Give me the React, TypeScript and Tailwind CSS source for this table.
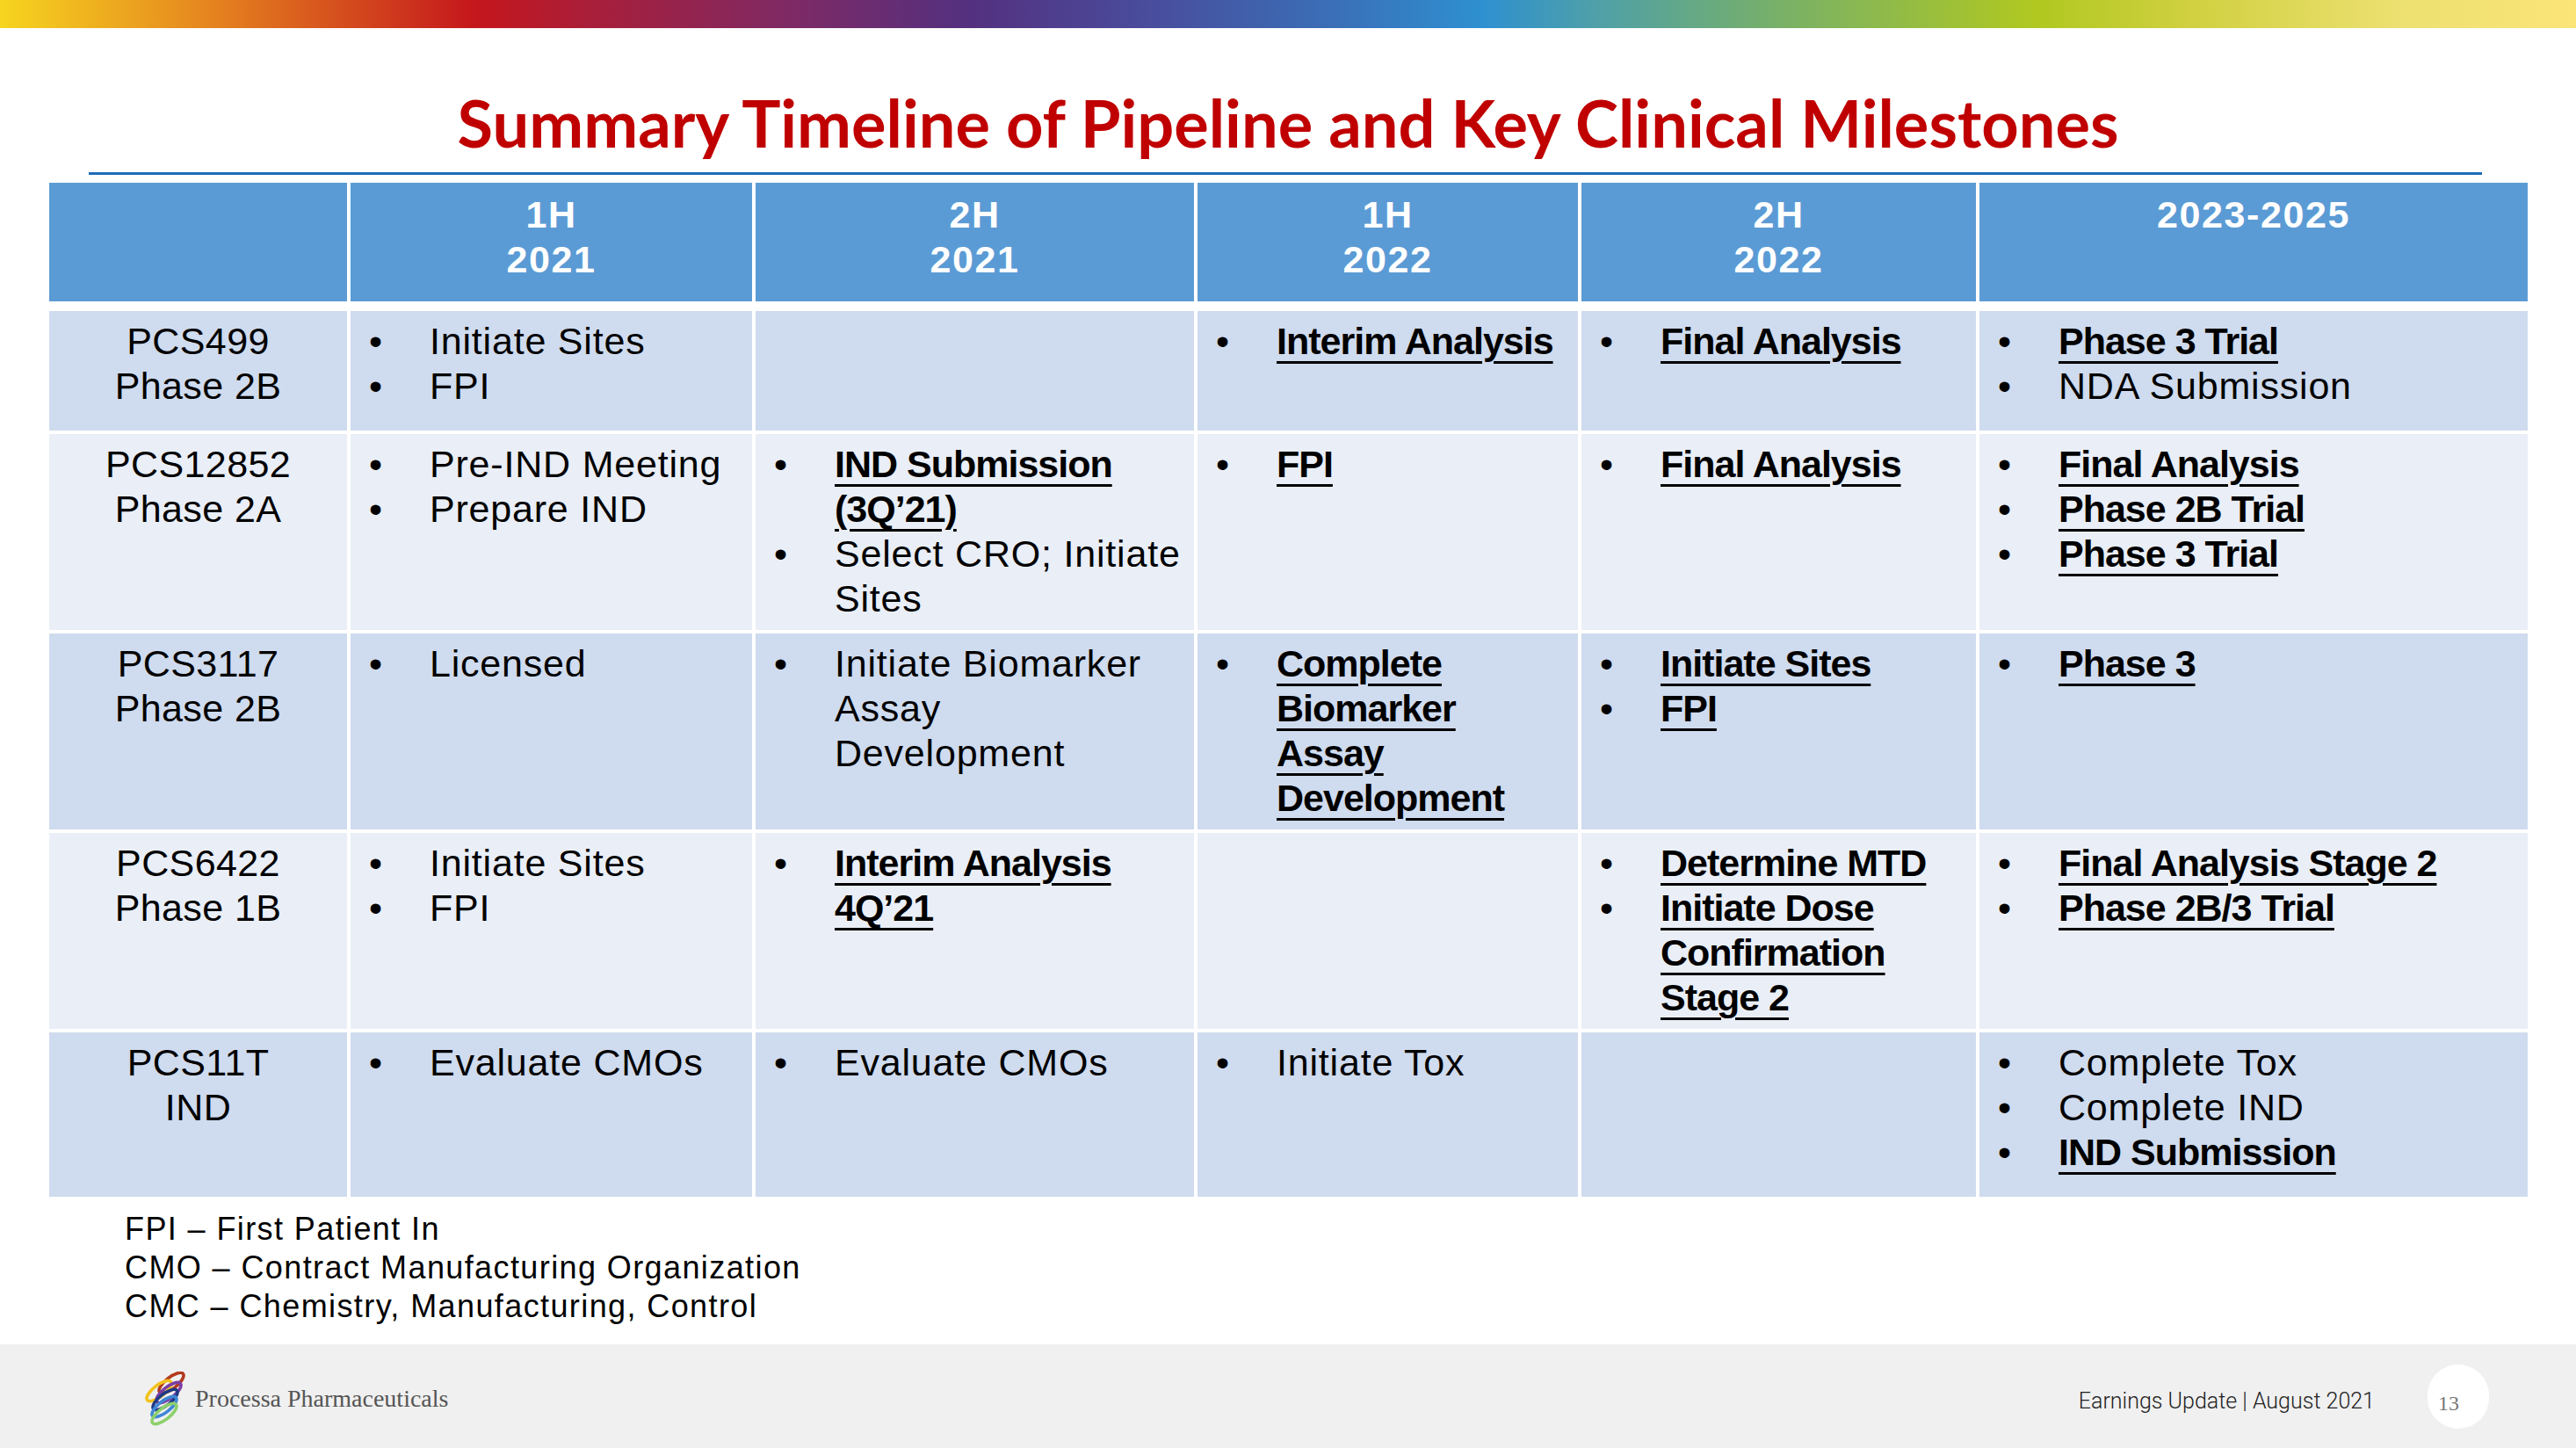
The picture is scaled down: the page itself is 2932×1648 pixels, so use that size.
import React from "react";

type Item = { l: string[]; b?: boolean };
const r = (...l: string[]): Item => ({ l });
const b = (...l: string[]): Item => ({ l, b: true });

const rows: { name: [string, string]; h: string; bg: string; cells: Item[][] }[] = [
  {
    name: ["PCS499", "Phase 2B"],
    h: "h-[136px]",
    bg: "bg-[#cfdbee]",
    cells: [
      [r("Initiate Sites"), r("FPI")],
      [],
      [b("Interim Analysis")],
      [b("Final Analysis")],
      [b("Phase 3 Trial"), r("NDA Submission")],
    ],
  },
  {
    name: ["PCS12852", "Phase 2A"],
    h: "h-[223px]",
    bg: "bg-[#e9eef7]",
    cells: [
      [r("Pre-IND Meeting"), r("Prepare IND")],
      [b("IND Submission", "(3Q\u201921)"), r("Select CRO; Initiate", "Sites")],
      [b("FPI")],
      [b("Final Analysis")],
      [b("Final Analysis"), b("Phase 2B Trial"), b("Phase 3 Trial")],
    ],
  },
  {
    name: ["PCS3117", "Phase 2B"],
    h: "h-[223px]",
    bg: "bg-[#cfdbee]",
    cells: [
      [r("Licensed")],
      [r("Initiate Biomarker", "Assay", "Development")],
      [b("Complete", "Biomarker", "Assay", "Development")],
      [b("Initiate Sites"), b("FPI")],
      [b("Phase 3")],
    ],
  },
  {
    name: ["PCS6422", "Phase 1B"],
    h: "h-[223px]",
    bg: "bg-[#e9eef7]",
    cells: [
      [r("Initiate Sites"), r("FPI")],
      [b("Interim Analysis", "4Q\u201921")],
      [],
      [b("Determine MTD"), b("Initiate Dose", "Confirmation", "Stage 2")],
      [b("Final Analysis Stage 2"), b("Phase 2B/3 Trial")],
    ],
  },
  {
    name: ["PCS11T", "IND"],
    h: "h-[187px]",
    bg: "bg-[#cfdbee]",
    cells: [
      [r("Evaluate CMOs")],
      [r("Evaluate CMOs")],
      [r("Initiate Tox")],
      [],
      [r("Complete Tox"), r("Complete IND"), b("IND Submission")],
    ],
  },
];

const headers: string[][] = [
  [],
  ["1H", "2021"],
  ["2H", "2021"],
  ["1H", "2022"],
  ["2H", "2022"],
  ["2023-2025"],
];

const GRID = "grid grid-cols-[339px_457px_499px_433px_449px_624px] gap-x-[4px]";

function Bullets({ items }: { items: Item[] }) {
  return (
    <div className="flex flex-col pt-[9px] pr-[8px]">
      {items.map((it, i) => (
        <div key={i} className="flex pl-[21px]">
          <span className="w-[69px] shrink-0 text-[43px] leading-[51px]">•</span>
          <div className="flex-1 whitespace-nowrap">
            {it.l.map((line, j) =>
              it.b ? (
                <div key={j} className="text-[43px] leading-[51px]">
                  <span className="font-bold tracking-[-1px] underline decoration-[3px] underline-offset-[8px]">
                    {line}
                  </span>
                </div>
              ) : (
                <div key={j} className="text-[43px] leading-[51px] tracking-[0.8px]">
                  {line}
                </div>
              )
            )}
          </div>
        </div>
      ))}
    </div>
  );
}

function Rings() {
  const rings = [
    { cx: 38, cy: 13, c: "#b23a1e" },
    { cx: 24, cy: 22, c: "#f2c21c" },
    { cx: 35, cy: 24, c: "#7b3fa3" },
    { cx: 31, cy: 32, c: "#1f3a86" },
    { cx: 30, cy: 40, c: "#3f86d6" },
    { cx: 30, cy: 48, c: "#8cd06a" },
  ];
  return (
    <svg width="62" height="62" viewBox="0 0 60 62">
      {rings.map((g, i) => (
        <ellipse
          key={i}
          cx={g.cx}
          cy={g.cy}
          rx="17"
          ry="6.5"
          fill="none"
          stroke={g.c}
          strokeWidth="3.6"
          transform={`rotate(-38 ${g.cx} ${g.cy})`}
        />
      ))}
    </svg>
  );
}

export default function App() {
  return (
    <div className="w-[2932px] h-[1648px] bg-white flex flex-col overflow-hidden font-['Liberation_Sans',Arial,sans-serif] text-black">
      <div className="h-[32px] shrink-0 bg-[linear-gradient(90deg,#f6d51f_0%,#e6861f_8%,#c4161c_18.5%,#a81e3a_23%,#7c2a66_31%,#54307f_37.5%,#4a4a9a_44%,#3a70b8_52%,#2e90d0_57.5%,#4fa0a8_62%,#78b068_69%,#b0c820_79%,#d0d040_85%,#ece070_93%,#fbe478_100%)]" />

      <div className="pt-[70px] text-center font-['Lato',sans-serif] font-bold text-[#c00000] text-[74px] leading-[75px]">
        Summary Timeline of Pipeline and Key Clinical Milestones
      </div>

      <div className="mt-[19px] ml-[101px] mr-[107px] h-[3px] bg-[#1d6cb8]" />

      <div className="mt-[9px] ml-[56px] w-[2821px] flex flex-col gap-y-[4px]">
        <div className={`${GRID} h-[135px] mb-[7px]`}>
          {headers.map((h, i) => (
            <div key={i} className="bg-[#5b9bd5] pt-[11px] text-center text-white font-bold text-[43px] leading-[51px] tracking-[1.6px]">
              {h.map((l, j) => (
                <div key={j}>{l}</div>
              ))}
            </div>
          ))}
        </div>
        {rows.map((row, i) => (
          <div key={i} className={`${GRID} ${row.h}`}>
            <div className={`${row.bg} pt-[9px] text-center text-[43px] leading-[51px] tracking-[0.4px]`}>
              <div>{row.name[0]}</div>
              <div>{row.name[1]}</div>
            </div>
            {row.cells.map((c, j) => (
              <div key={j} className={row.bg}>
                {c.length > 0 && <Bullets items={c} />}
              </div>
            ))}
          </div>
        ))}
      </div>

      <div className="mt-[15px] pl-[142px] text-[36px] leading-[44px] tracking-[1.4px]">
        <div>FPI – First Patient In</div>
        <div>CMO – Contract Manufacturing Organization</div>
        <div>CMC – Chemistry, Manufacturing, Control</div>
      </div>

      <div className="mt-auto h-[118px] shrink-0 bg-[#f0f0f0] flex items-center">
        <div className="ml-[156px] flex items-center gap-[4px] pt-[6px]">
          <Rings />
          <span className="font-['Liberation_Serif',serif] text-[28px] text-[#555555]">
            Processa Pharmaceuticals
          </span>
        </div>
        <div className="ml-auto mr-[99px] flex items-center gap-[60px]">
          <span className="font-['Roboto',sans-serif] font-light text-[25px] text-[#222222] pt-[12px]">
            Earnings Update | August 2021
          </span>
          <div className="w-[70px] h-[73px] rounded-full bg-white pl-[12px] pt-[30px] font-['Liberation_Serif',serif] text-[24px] leading-[28px] text-[#777777]">
            13
          </div>
        </div>
      </div>
    </div>
  );
}
